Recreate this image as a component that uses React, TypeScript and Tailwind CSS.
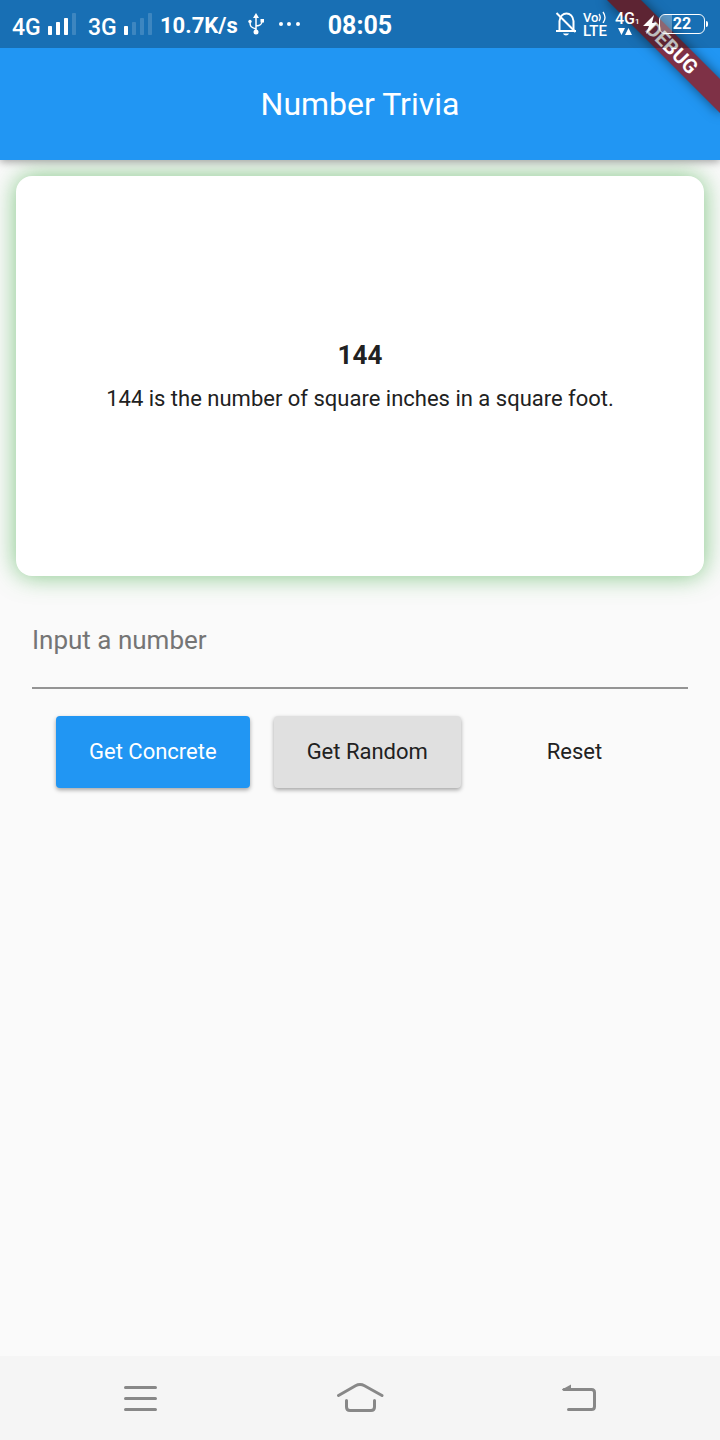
import { useState } from "react";

function Signal({ level }: { level: number }) {
  const heights = [9, 13, 17, 22];
  return (
    <svg className="h-6 w-7" viewBox="0 0 28 24" fill="white" aria-hidden="true">
      {heights.map((h, i) => (
        <rect key={h} x={i * 8} y={23 - h} width="4" height={h} rx="0.7" opacity={i < level ? 1 : 0.16} />
      ))}
    </svg>
  );
}

function StatusBar() {
  return (
    <div className="absolute inset-x-0 top-0 flex h-12 items-center justify-between bg-black/26 pr-4 pl-3 text-white">
      <div className="flex items-center">
        <span className="w-9 pt-2 text-[23px] font-medium">4G</span>
        <Signal level={3} />
        <span className="ml-3 w-9 pt-2 text-[23px] font-medium">3G</span>
        <Signal level={1} />
        <span className="ml-2 pt-0.5 text-[22px] font-bold">10.7K/s</span>
        <svg className="ml-2 h-6 w-5" viewBox="0 0 20 24" fill="none" stroke="white" strokeWidth="1.5" aria-hidden="true">
          <path d="M10 20V4M10 17C5 15.500 4 14.500 4 10M10 14C15 13.500 16 12 16 9" />
          <path d="M10 1L7 6h6Z" fill="white" stroke="none" />
          <circle cx="10" cy="20" r="2.500" fill="white" stroke="none" />
          <circle cx="4" cy="9.500" r="1.700" fill="white" stroke="none" />
          <path d="M14.500 7h3.500v3.500h-3.500Z" fill="white" stroke="none" />
        </svg>
        <svg className="ml-3 h-6 w-6" viewBox="0 0 24 24" fill="white" aria-hidden="true">
          <circle cx="3" cy="12" r="2" />
          <circle cx="11" cy="12" r="2" />
          <circle cx="20" cy="12" r="2" />
        </svg>
        <span className="ml-[26px] pt-1 text-[25px] font-bold">08:05</span>
      </div>
      <div className="flex items-center">
        <svg className="h-6 w-6" viewBox="0 0 24 24" fill="none" stroke="white" strokeWidth="2" aria-hidden="true">
          <path d="M4.500 18V9C5 4.500 8 1.500 11.500 1.500S18 4.500 18.500 9V18M1 19H21" />
          <path d="M1.500 1L20.500 20" />
          <path d="M8 21.500h6c-1 2.500-5 2.500-6 0Z" fill="white" stroke="none" />
        </svg>
        <div className="ml-1 flex w-8 flex-col text-[15px] leading-[14px] font-medium">
          <span className="flex text-[13px] leading-[13px]">
            Vo
            <svg className="h-3 w-3" viewBox="0 0 12 12" fill="none" stroke="white" strokeWidth="1.300" aria-hidden="true">
              <path d="M1 3Q3.500 6.500 1 10M5 1Q9 6.500 5 12" />
            </svg>
          </span>
          <span>LTE</span>
        </div>
        <div className="flex w-6 flex-col text-base leading-[14px] font-medium">
          <span className="flex items-end">
            4G<small className="text-[8px] leading-[8px]">1</small>
          </span>
          <svg className="mt-0.5 ml-0.5 h-2 w-4" viewBox="0 0 16 8" fill="white" aria-hidden="true">
            <path d="M1 0h7L4.500 7ZM8 7h7L11.500 0Z" />
          </svg>
        </div>
        <svg className="ml-1 h-6 w-4" viewBox="0 0 16 24" fill="white" aria-hidden="true">
          <path d="M11 3L0 14h6L3 22 14 11H9Z" />
        </svg>
        <div className="relative flex h-5 w-[46px] items-center justify-center overflow-hidden rounded-md border border-white text-base leading-4 font-bold">
          <span className="absolute inset-y-0 left-0 w-3 bg-white/30" />
          <span className="relative">22</span>
        </div>
        <span className="-mr-1 ml-px h-1.5 w-0.5 rounded-r bg-white" />
      </div>
    </div>
  );
}

function DebugBanner() {
  return (
    <div className="pointer-events-none absolute top-0 right-0 size-40 overflow-hidden">
      <div className="absolute top-9 -right-8 flex h-6 w-40 rotate-45 items-center justify-center bg-[#7e3146] text-[20px] leading-6 font-bold text-white shadow-[0_0_12px_rgba(0,0,0,0.5)]">
        DEBUG
      </div>
    </div>
  );
}

function NavBar() {
  const button = "flex h-14 w-20 items-center justify-center";
  return (
    <nav className="flex h-[84px] items-center justify-between bg-[#f5f5f5] px-[100px]">
      <button type="button" aria-label="Recent apps" className={button}>
        <svg className="h-8 w-12" viewBox="0 0 48 32" fill="none" stroke="#888" strokeWidth="3" strokeLinecap="round">
          <path d="M9.500 5.500h30M9.500 16.500h30M9.500 27.500h30" />
        </svg>
      </button>
      <button type="button" aria-label="Home" className={button}>
        <svg className="h-8 w-12" viewBox="0 0 48 32" fill="none" stroke="#888" strokeWidth="3" strokeLinecap="round">
          <path d="M2.500 13.500L19.500 3.700Q24 1.300 28.500 3.700L46 13.500" />
          <path d="M10.500 18.500V25Q10.500 28.500 14 28.500H35Q38.500 28.500 38.500 25V18.500" />
        </svg>
      </button>
      <button type="button" aria-label="Back" className={button}>
        <svg className="h-8 w-12" viewBox="0 0 48 32" fill="none" stroke="#888" strokeWidth="3" strokeLinecap="round">
          <path d="M8 7.500H35.500Q38.500 7.500 38.500 10.500V24.500Q38.500 27.500 35.500 27.500H12.500" />
          <path d="M6 7.500L15 2.500V8H6Z" fill="#888" stroke="none" />
        </svg>
      </button>
    </nav>
  );
}

export default function App() {
  const [value, setValue] = useState("");
  return (
    <div className="relative flex min-h-screen flex-col bg-[#fafafa] font-['Roboto',sans-serif] text-[#212121]">
      <header className="relative z-10 bg-[#2196f3] pt-12 shadow-[0_2px_8px_rgba(0,0,0,0.35)]">
        <h1 className="flex h-28 items-center justify-center text-[32px] text-white">Number Trivia</h1>
        <DebugBanner />
        <StatusBar />
      </header>
      <main className="flex-1 p-4">
        <section className="flex h-[400px] flex-col items-center justify-center gap-2 rounded-2xl bg-white px-8 pt-0.5 text-center shadow-[0_0_24px_rgba(76,175,80,0.7)]">
          <h2 className="text-[26px] leading-9 font-bold">144</h2>
          <p className="text-[22px] leading-9">144 is the number of square inches in a square foot.</p>
        </section>
        <form className="px-4 pt-4" onSubmit={(event) => event.preventDefault()}>
          <input
            aria-label="Input a number"
            inputMode="numeric"
            placeholder="Input a number"
            value={value}
            onChange={(event) => setValue(event.target.value)}
            className="block h-[97px] w-full border-b-2 border-[#949494] bg-transparent text-[26px] outline-none placeholder:text-[#757575]"
          />
          <div className="mt-[27px] flex gap-6 px-6 text-[22px]">
            <button type="submit" className="h-[72px] rounded bg-[#2196f3] px-[33px] pb-0.5 text-white shadow-[0_2px_4px_rgba(0,0,0,0.35)]">
              Get Concrete
            </button>
            <button type="button" className="h-[72px] rounded bg-[#e0e0e0] px-[33px] pb-0.5 shadow-[0_2px_4px_rgba(0,0,0,0.35)]">
              Get Random
            </button>
            <button type="reset" onClick={() => setValue("")} className="h-[72px] flex-1 rounded px-[33px] pb-0.5">
              Reset
            </button>
          </div>
        </form>
      </main>
      <NavBar />
    </div>
  );
}
